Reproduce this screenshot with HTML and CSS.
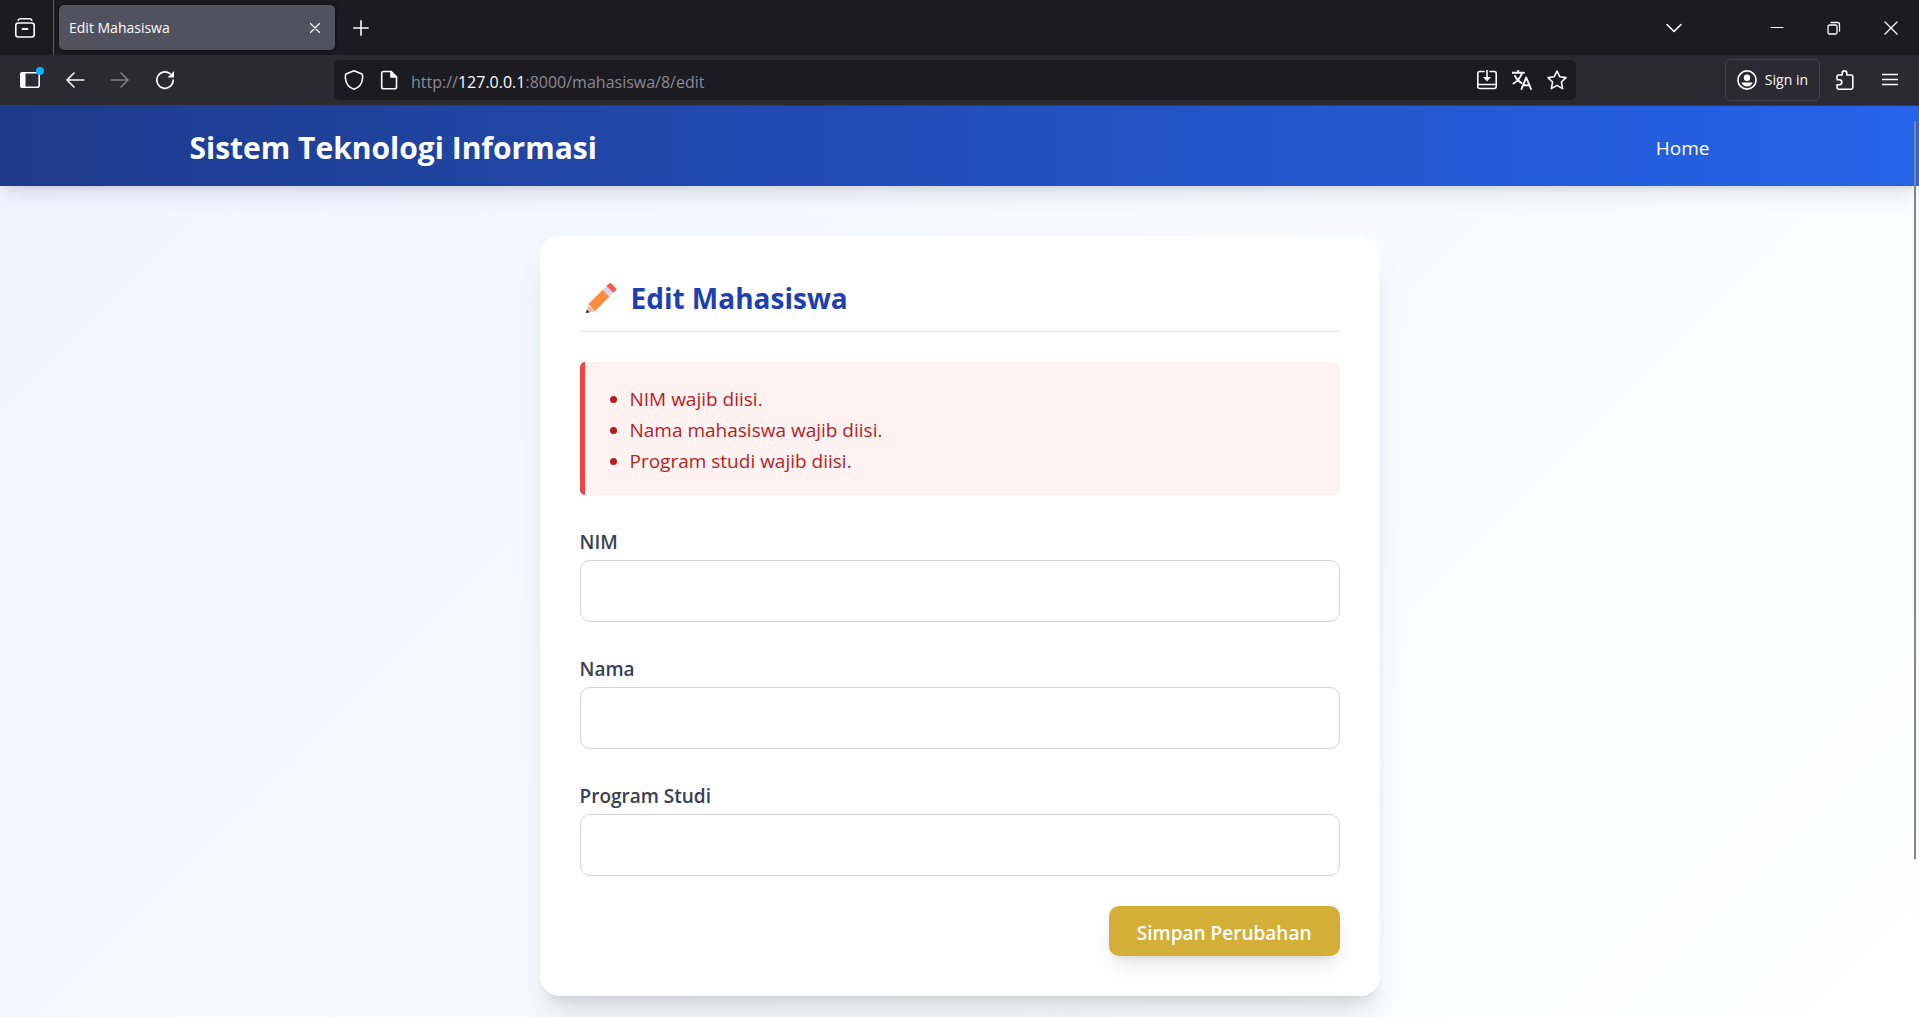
FILE: index.html
```html
<!DOCTYPE html>
<html lang="id">
<head>
<meta charset="utf-8">
<meta name="viewport" content="width=device-width, initial-scale=1">
<title>Edit Mahasiswa</title>
<link rel="stylesheet" href="styles.css">
</head>
<body>
<div class="tabbar">
  <button class="icon-btn tab-history" type="button" aria-label="Firefox View">
    <svg class="icon" viewBox="0 0 20 20"><path d="M3.200 2.300Q3.700.8 5.500.8h9q1.800 0 2.300 1.500"/><rect x=".8" y="5" width="18.400" height="14" rx="2.500"/><path d="M7.500 11h5" stroke-width="1.800"/></svg>
  </button>
  <div class="tab">
    <span class="tab-title">Edit Mahasiswa</span>
    <button class="tab-close" type="button" aria-label="Close tab"><svg class="icon small" viewBox="0 0 10 10"><path d="m.5.5 9 9m0-9-9 9"/></svg></button>
  </div>
  <button class="icon-btn new-tab" type="button" aria-label="New tab"><svg class="icon medium" viewBox="0 0 16 16"><path d="M8 .8v14.400M.8 8h14.400"/></svg></button>
  <div class="window-controls">
    <button class="icon-btn all-tabs" type="button" aria-label="List all tabs"><svg class="icon medium" viewBox="0 0 16 16"><path d="m1 4.500 7 7 7-7"/></svg></button>
    <button class="icon-btn win-btn" type="button" aria-label="Minimize"><svg class="icon win" viewBox="0 0 14 14"><path d="M1 6.500h12" stroke-width="1"/></svg></button>
    <button class="icon-btn win-btn" type="button" aria-label="Restore"><svg class="icon win" viewBox="0 0 14 14"><rect x="1" y="4" width="9" height="9" rx="1.500"/><path d="M4 1.500h6.500q2 0 2 2V10"/></svg></button>
    <button class="icon-btn win-btn" type="button" aria-label="Close"><svg class="icon win" viewBox="0 0 14 14"><path d="m1 1 12 12m0-12L1 13"/></svg></button>
  </div>
</div>
<div class="toolbar">
  <div class="nav">
    <button class="icon-btn nav-btn sidebar-btn" type="button" aria-label="Sidebar"><svg class="icon" viewBox="0 0 20 20"><rect x=".8" y="2.800" width="18.400" height="14.400" rx="2"/><path d="M1 3h4v14H1z" fill="currentColor" stroke-width="1"/></svg><span class="dot"></span></button>
    <button class="icon-btn nav-btn" type="button" aria-label="Back"><svg class="icon" viewBox="0 0 20 20"><path d="M18.800 10H2m7-7-7 7 7 7"/></svg></button>
    <button class="icon-btn nav-btn" type="button" aria-label="Forward" disabled><svg class="icon" viewBox="0 0 20 20"><path d="M1.200 10H18m-7-7 7 7-7 7"/></svg></button>
    <button class="icon-btn nav-btn" type="button" aria-label="Reload"><svg class="icon" viewBox="0 0 20 20"><path d="M18.200 10A8.200 8.200 0 1 1 15 3.600"/><path d="M19 1v6.500h-6.500z" fill="currentColor" stroke="none"/></svg></button>
  </div>
  <div class="urlbar">
    <svg class="icon" viewBox="0 0 20 20"><path d="M10 .8 18 4q.8 1.200.6 4c-.4 5-3.600 9.600-8.600 11.200C5 17.600 1.800 13 1.400 8q-.2-2.800.6-4z"/></svg>
    <svg class="icon page-icon" viewBox="0 0 20 20"><path d="M4.500 1.500H12L17.500 7v10q0 1.800-1.800 1.800H4.500Q2.700 18.800 2.700 17V3.300q0-1.800 1.800-1.800z"/><path d="M12 1.500V7h5.500z" fill="currentColor"/></svg>
    <p class="url">http://<strong>127.0.0.1</strong>:8000/mahasiswa/8/edit</p>
    <div class="url-actions">
      <svg class="icon" viewBox="0 0 20 20"><path d="M7 1.500H2.800q-2 0-2 2v13q0 2 2 2h14.400q2 0 2-2v-13q0-2-2-2H13M1 14.500h18M10 0v9"/><path d="M6 7h8l-4 4.500z" fill="currentColor" stroke="none"/></svg>
      <svg class="icon" viewBox="0 0 20 20"><path d="M0 2.800h12M6.200 0v2.500M10 3C8.500 8 5.500 11 1.500 13.500M3 6c1.200 3 3 5 6.500 7M9.500 19l4.700-11.500L19 19M11 15.200h6.500" stroke-width="1.900"/></svg>
      <svg class="icon" viewBox="0 0 20 20"><path d="m10 1 2.700 5.700 6.300.9-4.600 4.400 1.200 6.600-5.600-3.200-5.600 3.200L5.600 12 1 7.600l6.300-.9z"/></svg>
    </div>
  </div>
  <button class="signin" type="button">
    <svg class="icon" viewBox="0 0 20 20"><circle cx="10" cy="10" r="9.100"/><circle cx="10" cy="7.800" r="3.200" fill="currentColor" stroke="none"/><path d="M4.500 12.500h11Q14 16.500 10 16.500t-5.500-4z" fill="currentColor" stroke="none"/></svg>
    <span>Sign in</span>
  </button>
  <button class="icon-btn nav-btn" type="button" aria-label="Extensions"><svg class="icon" viewBox="0 0 20 20"><path d="M2 9V6.500Q2 5 3.500 5h3.700V3.200a2.300 2.300 0 0 1 4.600 0V5h4.400q1.600 0 1.600 1.600v11q0 1.600-1.600 1.600H3.600Q2 19.200 2 17.600V14.800h2.300a2.500 2.500 0 0 0 0-5H2.200z"/></svg></button>
  <button class="icon-btn nav-btn" type="button" aria-label="Menu"><svg class="icon medium" viewBox="0 0 16 16"><path d="M.5 2.500h15m-15 5h15m-15 5h15" stroke-width="1.300"/></svg></button>
</div>
<div class="page">
  <header class="site-header">
    <div class="header-inner">
      <span class="brand">Sistem Teknologi Informasi</span>
      <nav><a class="nav-link" href="#">Home</a></nav>
    </div>
  </header>
  <main class="content">
    <section class="card">
      <h1 class="card-title">
        <svg class="pencil" viewBox="0 0 32 32" aria-hidden="true">
          <defs><linearGradient id="wood" x1="0" y1="0" x2="1" y2="1"><stop offset="0.200" stop-color="#f5793a"/><stop offset=".5" stop-color="#ff9040"/><stop offset="1" stop-color="#e8623c"/></linearGradient></defs>
          <path d="m3.500 23.500 5.800 5.800L1.500 31Q.8 31 1 30.200z" fill="#e9b7a4"/>
          <path d="M1.800 27.800 1 30.200q-.2.900.6.800l3-.7z" fill="#3b2440"/>
          <path d="M3 22.500 18.500 7l6.700 6.700L9.500 29.400Q9 26.700 6.700 26.300 6 23.300 3 22.500z" fill="url(#wood)"/>
          <path d="m17.500 8 4.700-4.700 6.700 6.700-4.700 4.700z" fill="#dcd3ee"/>
          <path d="m21.500 4 2.500-2.500q1.200-1.100 2.400 0l4.500 4.500q1 1.200 0 2.300l-2.500 2.500z" fill="#fb5a52"/>
        </svg>
        Edit Mahasiswa
      </h1>
      <div class="alert" role="alert">
        <ul class="alert-list">
          <li>NIM wajib diisi.</li>
          <li>Nama mahasiswa wajib diisi.</li>
          <li>Program studi wajib diisi.</li>
        </ul>
      </div>
      <form class="form">
        <div class="field"><label for="nim">NIM</label><input id="nim" name="nim" type="text"></div>
        <div class="field"><label for="nama">Nama</label><input id="nama" name="nama" type="text"></div>
        <div class="field"><label for="prodi">Program Studi</label><input id="prodi" name="prodi" type="text"></div>
        <button class="submit" type="submit">Simpan Perubahan</button>
      </form>
    </section>
  </main>
  <div class="scroll-thumb"></div>
</div>
</body>
</html>
```
FILE: styles.css
```css
* { box-sizing: border-box; }

body {
  margin: 0;
  min-height: 100vh;
  display: flex;
  flex-direction: column;
  font-family: "Segoe UI", "Open Sans", sans-serif;
  font-size: 19px;
  line-height: 30px;
}

button { font: inherit; color: inherit; border: 0; background: none; padding: 0; }
p, ul, h1 { margin: 0; padding: 0; }

.icon {
  display: block;
  flex: none;
  width: 20px;
  height: 20px;
  fill: none;
  stroke: currentColor;
  stroke-width: 1.6;
  stroke-linecap: round;
  stroke-linejoin: round;
}
.icon.medium { width: 16px; height: 16px; }
.icon.win { width: 14px; height: 14px; stroke-width: 1.3; }
.icon.small { width: 10px; height: 10px; stroke-width: 1.3; }

.icon-btn { display: flex; align-items: center; justify-content: center; }

/* Browser tab strip */
.tabbar {
  display: flex;
  align-items: center;
  height: 55px;
  background: #1c1b22;
  color: #fbfbfe;
}
.tab-history {
  width: 54px;
  height: 55px;
  padding-right: 4px;
  border-right: 1px solid #5b5b66;
}
.tab {
  display: flex;
  align-items: center;
  justify-content: space-between;
  width: 276px;
  height: 45px;
  margin-left: 5px;
  padding: 0 15px 0 10px;
  border-radius: 5px;
  background: #52525e;
  box-shadow: 0 0 4px rgba(0, 0, 0, .6);
  font-size: 14px;
}
.new-tab { width: 52px; height: 45px; }
.window-controls { display: flex; margin-left: auto; }
.all-tabs { width: 45px; height: 45px; margin-right: 52px; }
.win-btn { width: 57px; height: 45px; }

/* Browser toolbar */
.toolbar {
  display: flex;
  align-items: center;
  height: 51px;
  padding: 0 7px;
  background: #2b2a33;
  border-bottom: 1px solid #3d3c45;
  color: #fbfbfe;
}
.nav { display: flex; }
.nav-btn { position: relative; width: 45px; height: 40px; }
.nav-btn:disabled { opacity: .4; }
.dot {
  position: absolute;
  top: 7px;
  right: 8px;
  width: 8px;
  height: 8px;
  border-radius: 50%;
  background: #00b3ff;
}
.urlbar {
  display: flex;
  flex: 1;
  align-items: center;
  height: 40px;
  margin: 0 149px 0 147px;
  padding: 0 9px 0 10px;
  border-radius: 5px;
  background: #1c1b22;
}
.page-icon { margin-left: 15px; }
.url { flex: 1; margin-left: 12px; padding-top: 3px; font-size: 16px; color: #8b8a92; }
.url strong { font-weight: 400; color: #fbfbfe; }
.url-actions { display: flex; gap: 15px; }
.signin {
  display: flex;
  align-items: center;
  gap: 8px;
  height: 42px;
  margin-right: 2px;
  padding: 0 11px;
  border: 1px solid #42414d;
  border-radius: 5px;
  font-size: 14px;
}

/* Page */
.page {
  position: relative;
  display: flex;
  flex: 1;
  flex-direction: column;
  overflow: hidden;
  background: linear-gradient(135deg, #eff4ff, #fff);
}
.scroll-thumb {
  position: absolute;
  top: 15px;
  right: 3px;
  width: 2px;
  height: 81%;
  background: #858585;
}
.site-header {
  background: linear-gradient(90deg, #1e3a8a, #2563eb);
  box-shadow: 0 12px 19px -4px rgba(0, 0, 0, .1), 0 5px 8px -5px rgba(0, 0, 0, .1);
  color: #fff;
}
.header-inner {
  display: flex;
  align-items: center;
  justify-content: space-between;
  max-width: 1600px;
  height: 80px;
  margin: 0 auto;
  padding: 4px 30px 0;
}
.brand { font-size: 30px; line-height: 40px; font-weight: 700; }
.nav-link { display: block; padding: 0 20px; color: #fff; text-decoration: none; }

.content { padding: 50px 20px 20px; }
.card {
  max-width: 840px;
  margin: 0 auto;
  padding: 40px;
  border-radius: 20px;
  background: #fff;
  box-shadow: 0 25px 31px -6px rgba(0, 0, 0, .1), 0 10px 12px -7px rgba(0, 0, 0, .1);
}
.card-title {
  display: flex;
  align-items: center;
  gap: 14px;
  margin-bottom: 30px;
  padding: 2px 0 13px 5px;
  border-bottom: 1px solid #e5e7eb;
  font-size: 28px;
  line-height: 40px;
  font-weight: 700;
  color: #1e40af;
}
.pencil { width: 32px; height: 32px; }
.alert {
  margin-bottom: 30px;
  padding: 22px 20px 18px;
  border-left: 5px solid #ef4444;
  border-radius: 5px;
  background: #fef2f2;
  color: #b91c1c;
}
.alert-list { padding-left: 25px; line-height: 31px; }
.form { display: flex; flex-direction: column; gap: 30px; }
.field { display: flex; flex-direction: column; gap: 1px; }
.field label { line-height: 34px; font-weight: 600; color: #374151; }
.field input {
  width: 100%;
  height: 62px;
  padding: 0 20px;
  border: 1px solid #d1d5db;
  border-radius: 10px;
  background: #fff;
  font: inherit;
}
.submit {
  align-self: flex-end;
  height: 50px;
  padding: 4px 28px 0;
  border-radius: 10px;
  background: #d4af37;
  box-shadow: 0 12px 19px -4px rgba(0, 0, 0, .1), 0 5px 8px -5px rgba(0, 0, 0, .1);
  font-weight: 600;
  color: #fff;
}
```
